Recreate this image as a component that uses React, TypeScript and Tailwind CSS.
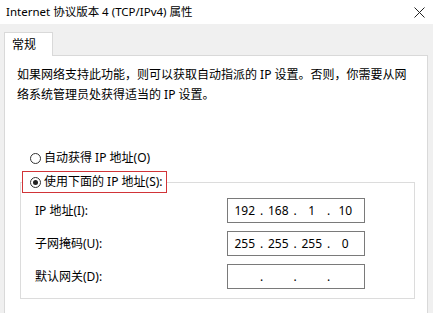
import React from 'react';

const Radio: React.FC<{ checked?: boolean }> = ({ checked }) => (
  <span className="w-[11px] h-[11px] rounded-full border border-[#333] bg-white flex items-center justify-center shrink-0">
    {checked && <span className="w-[5px] h-[5px] rounded-full bg-[#222]" />}
  </span>
);

const IpInput: React.FC<{ parts: string[] }> = ({ parts }) => (
  <div className="w-[138px] h-[25px] border border-[#7a7a7a] bg-white flex items-center pl-[2px] text-[12px] leading-none">
    {parts.map((p, i) => (
      <React.Fragment key={i}>
        <span className="w-[29.5px] text-center">{p}</span>
        {i < 3 && <span className="w-[4px] text-center">.</span>}
      </React.Fragment>
    ))}
  </div>
);

const FieldRow: React.FC<{ label: string; parts: string[] }> = ({ label, parts }) => (
  <div className="flex items-center h-[25px]">
    <span className="w-[206px] pl-[14px] text-[12px]">{label}</span>
    <IpInput parts={parts} />
  </div>
);

const App: React.FC = () => {
  return (
    <div className="w-[433px] h-[313px] overflow-hidden bg-[#f0f0f0] text-black font-['Noto_Sans','Noto_Sans_CJK_SC',sans-serif]">
      <div className="h-[24px] bg-white flex items-center justify-between pl-[6px] pr-[8px]">
        <span className="text-[11.5px] leading-none">Internet 协议版本 4 (TCP/IPv4) 属性</span>
        <svg width="11" height="11" viewBox="0 0 11 11" className="stroke-[#222]">
          <path d="M0.5 0.5 L10.5 10.5 M10.5 0.5 L0.5 10.5" strokeWidth="1" fill="none" />
        </svg>
      </div>

      <div className="pt-[8px] pl-[4px] pr-[5px]">
        <div className="w-[49px] h-[24px] bg-white border border-b-0 border-[#d9d9d9] flex items-center pl-[7px] text-[12px] relative z-10 -mb-px">
          常规
        </div>
        <div className="bg-white border border-[#d9d9d9] h-[300px] pl-[12px] pt-[9px]">
          <p className="text-[12px] leading-[20px]">
            如果网络支持此功能，则可以获取自动指派的 IP 设置。否则，你需要从网
            <br />
            络系统管理员处获得适当的 IP 设置。
          </p>

          <div className="mt-[43px] flex items-center gap-[3px] h-[20px] pl-[13px] text-[12px]">
            <Radio />
            <span>自动获得 IP 地址(O)</span>
          </div>

          <fieldset className="mt-[3px] ml-[3px] mr-[12px] border border-[#dcdcdc] px-0 pb-[9px]">
            <legend className="ml-[1px] h-[22px] border border-[#d13438] flex items-center gap-[3px] pl-[7px] pr-[3px] text-[12px]">
              <Radio checked />
              <span>使用下面的 IP 地址(S):</span>
            </legend>
            <div className="mt-[5px] flex flex-col gap-[8px]">
              <FieldRow label="IP 地址(I):" parts={['192', '168', '1', '10']} />
              <FieldRow label="子网掩码(U):" parts={['255', '255', '255', '0']} />
              <FieldRow label="默认网关(D):" parts={['', '', '', '']} />
            </div>
          </fieldset>
        </div>
      </div>
    </div>
  );
};

export default App;
